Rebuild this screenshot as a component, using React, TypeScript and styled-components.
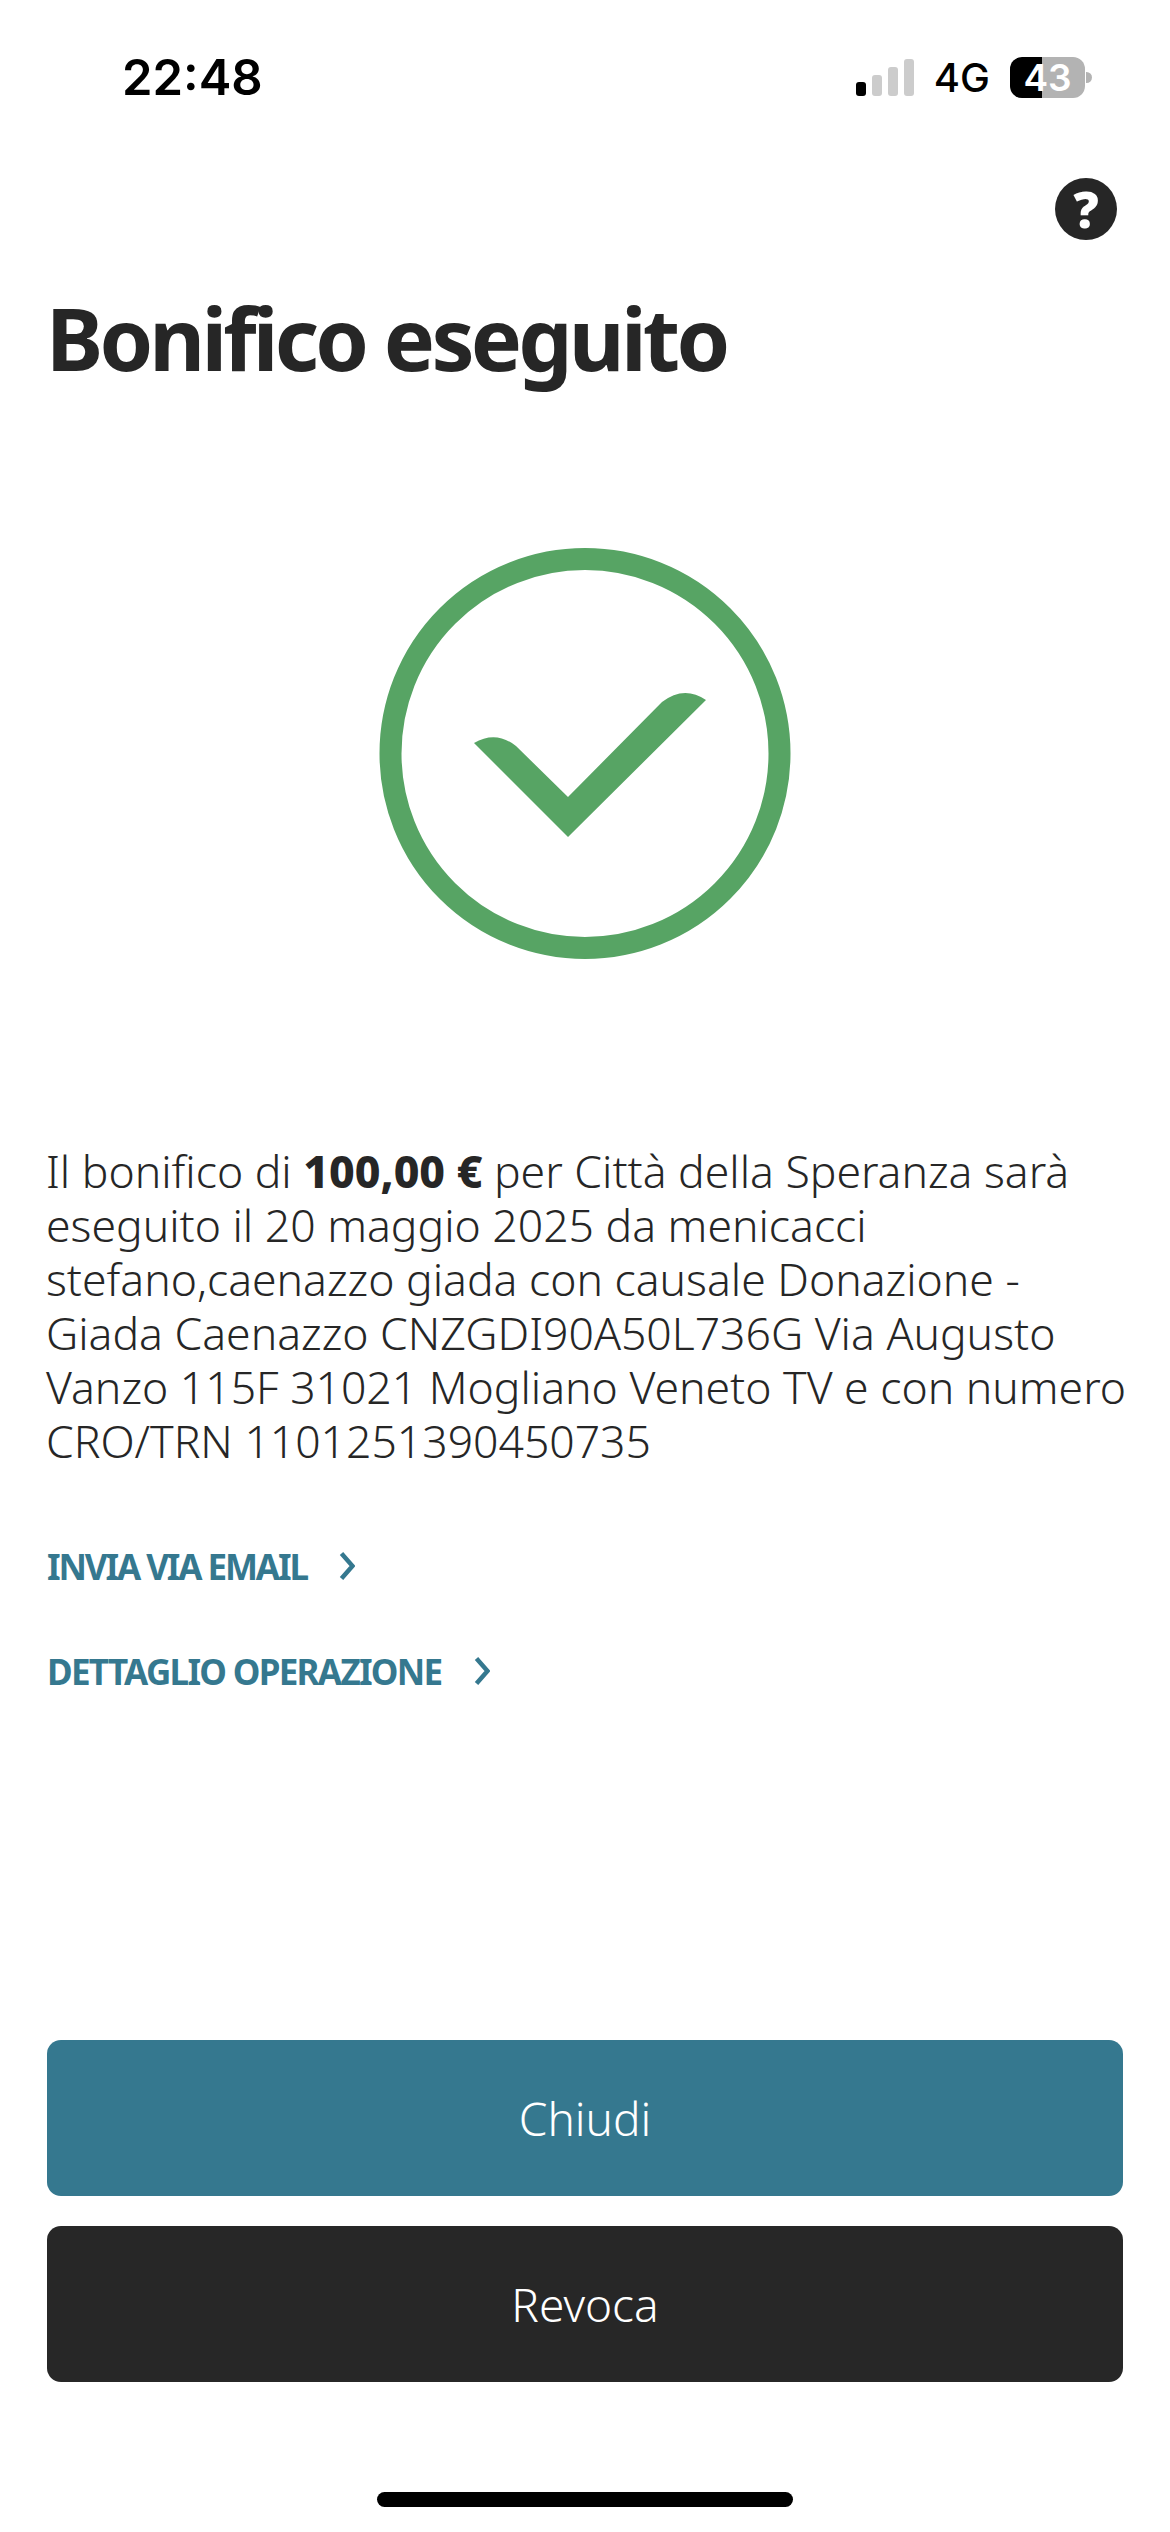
import React from "react";
import styled, { createGlobalStyle } from "styled-components";

const Global = createGlobalStyle`
  html, body { margin: 0; padding: 0; background: #fff; }
  * { box-sizing: border-box; }
`;

const Screen = styled.div`
  width: 1170px;
  height: 2532px;
  background: #fff;
  display: flex;
  flex-direction: column;
  overflow: hidden;
  font-family: "Noto Sans", Lato, sans-serif;
  color: #262626;
`;

const StatusBar = styled.div`
  height: 98px;
  padding: 57px 78px 0 122px;
  display: flex;
  justify-content: space-between;
  align-items: center;
  font-family: Inter, "Liberation Sans", sans-serif;
  color: #000;
`;

const Clock = styled.div`
  font-size: 49px;
  font-weight: 600;
  line-height: 41px;
`;

const StatusRight = styled.div`
  display: flex;
  align-items: center;
`;

const Signal = styled.div`
  display: flex;
  align-items: flex-end;
  gap: 6px;
  height: 37px;
  margin-right: 20px;
`;

const Bar = styled.span<{ $h: number; $on?: boolean }>`
  width: 10px;
  height: ${(p) => p.$h}px;
  border-radius: 3px;
  background: ${(p) => (p.$on ? "#000" : "#cccccc")};
`;

const Network = styled.span`
  font-size: 40px;
  font-weight: 500;
  line-height: 41px;
  margin-right: 20px;
`;

const Battery = styled.div`
  width: 75px;
  height: 41px;
  border-radius: 12px;
  background: linear-gradient(90deg, #000 43%, #b3b3b3 43%);
  color: #fff;
  font-size: 37px;
  font-weight: 600;
  display: flex;
  align-items: center;
  justify-content: center;
  line-height: 1;
`;

const Nub = styled.span`
  width: 6px;
  height: 11px;
  margin-left: 1px;
  border-radius: 0 6px 6px 0;
  background: #b3b3b3;
`;

const HelpRow = styled.div`
  display: flex;
  justify-content: flex-end;
  padding: 80px 53px 0 0;
`;

const HelpBadge = styled.div`
  width: 62px;
  height: 62px;
  border-radius: 50%;
  background: #262626;
  color: #fff;
  font-size: 50px;
  font-weight: 900;
  line-height: 62px;
  text-align: center;
`;

const Title = styled.h1`
  margin: 46px 0 0;
  padding-left: 46px;
  font-size: 86px;
  font-weight: 700;
  letter-spacing: -3.8px;
  line-height: 104px;
`;

const StatusIcon = styled.svg`
  display: block;
  align-self: center;
  width: 412px;
  height: 412px;
  margin-top: 158px;
`;

const Message = styled.p`
  margin: 184px 0 0;
  padding-left: 46px;
  font-size: 44.5px;
  font-weight: 300;
  line-height: 54px;
  white-space: nowrap;
`;

const Amount = styled.strong`
  font-weight: 800;
`;

const Links = styled.div`
  margin-top: 76px;
  padding-left: 47px;
  display: flex;
  flex-direction: column;
  gap: 61px;
`;

const LinkRow = styled.a<{ $tracking: number }>`
  display: flex;
  align-items: center;
  gap: 32px;
  height: 44px;
  color: #35788f;
  font-size: 35px;
  font-weight: 700;
  letter-spacing: ${(p) => p.$tracking}px;
`;

const Actions = styled.div`
  margin-top: auto;
  padding: 0 47px;
  display: flex;
  flex-direction: column;
  gap: 30px;
`;

const Action = styled.button<{ $dark?: boolean }>`
  height: 156px;
  border: 0;
  border-radius: 14px;
  background: ${(p) => (p.$dark ? "#272727" : "#35788f")};
  color: #fff;
  font-family: inherit;
  font-size: 46px;
  font-weight: 300;
`;

const HomeBar = styled.div`
  align-self: center;
  width: 416px;
  height: 15px;
  margin: 110px 0 25px;
  border-radius: 8px;
  background: #000;
`;

const Chevron = () => (
  <svg width="16" height="28" viewBox="0 0 16 28" fill="none">
    <path d="M2.5 1.5 L13.5 14 L2.5 26.5" stroke="#35788f" strokeWidth="4.5" />
  </svg>
);

export default function App() {
  return (
    <Screen>
      <Global />
      <StatusBar>
        <Clock>22:48</Clock>
        <StatusRight>
          <Signal>
            <Bar $h={14} $on />
            <Bar $h={21} />
            <Bar $h={29} />
            <Bar $h={37} />
          </Signal>
          <Network>4G</Network>
          <Battery>43</Battery>
          <Nub />
        </StatusRight>
      </StatusBar>
      <HelpRow>
        <HelpBadge>?</HelpBadge>
      </HelpRow>
      <Title>Bonifico eseguito</Title>
      <StatusIcon viewBox="380 548 412 412">
        <circle cx="586" cy="753.5" r="194.5" fill="none" stroke="#57a464" strokeWidth="22" />
        <path
          d="M475 743 Q497 730 517 746 L569 797 L663 702 Q685 685 707 700 L569 837 Z"
          fill="#57a464"
        />
      </StatusIcon>
      <Message>
        Il bonifico di <Amount>100,00 €</Amount> per Città della Speranza sarà
        <br />
        eseguito il 20 maggio 2025 da menicacci
        <br />
        stefano,caenazzo giada con causale Donazione -
        <br />
        Giada Caenazzo CNZGDI90A50L736G Via Augusto
        <br />
        Vanzo 115F 31021 Mogliano Veneto TV e con numero
        <br />
        CRO/TRN 1101251390450735
      </Message>
      <Links>
        <LinkRow $tracking={-2.1}>
          INVIA VIA EMAIL
          <Chevron />
        </LinkRow>
        <LinkRow $tracking={-1.7}>
          DETTAGLIO OPERAZIONE
          <Chevron />
        </LinkRow>
      </Links>
      <Actions>
        <Action>Chiudi</Action>
        <Action $dark>Revoca</Action>
      </Actions>
      <HomeBar />
    </Screen>
  );
}
